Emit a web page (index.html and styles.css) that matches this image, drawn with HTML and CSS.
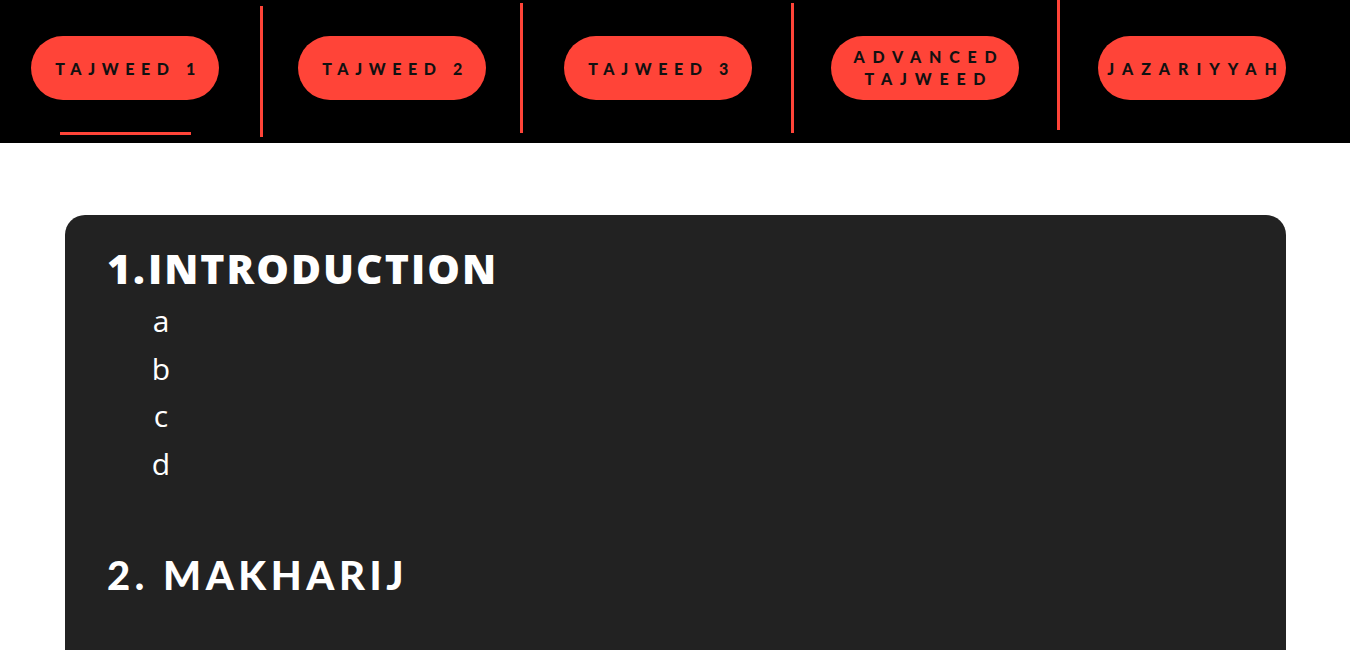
FILE: index.html
```html
<!DOCTYPE html>
<html lang="en">
<head>
<meta charset="utf-8">
<title>Tajweed</title>
<link rel="stylesheet" href="styles.css">
</head>
<body>
<header class="topbar">
  <nav class="nav">
    <div class="nav-item active">
      <a class="pill" href="#">TAJWEED 1</a>
      <span class="underline"></span>
    </div>
    <span class="sep sep-1"></span>
    <div class="nav-item"><a class="pill" href="#">TAJWEED 2</a></div>
    <span class="sep sep-2"></span>
    <div class="nav-item"><a class="pill" href="#">TAJWEED 3</a></div>
    <span class="sep sep-3"></span>
    <div class="nav-item"><a class="pill two-line" href="#">ADVANCED<br>TAJWEED</a></div>
    <span class="sep sep-4"></span>
    <div class="nav-item"><a class="pill wide" href="#">JAZARIYYAH</a></div>
  </nav>
</header>
<main class="page">
  <section class="card">
    <h2 class="title title-intro">1.<span class="gap"></span>INTRODUCTION</h2>
    <ul class="sublist">
      <li>a</li>
      <li>b</li>
      <li>c</li>
      <li>d</li>
    </ul>
    <h2 class="title title-makharij">2. MAKHARIJ</h2>
  </section>
</main>
</body>
</html>
```
FILE: styles.css
```css
* { box-sizing: border-box; }
html, body { margin: 0; padding: 0; }
body {
  background: #ffffff;
  font-family: "Open Sans", "Liberation Sans", sans-serif;
  overflow: hidden;
}
.topbar {
  background: #000000;
  height: 143px;
}
.nav {
  display: flex;
  align-items: flex-start;
  padding-left: 31px;
  height: 143px;
}
.nav-item {
  display: flex;
  flex-direction: column;
  align-items: center;
  margin-top: 36px;
  width: 188px;
}
.pill {
  display: flex;
  align-items: center;
  justify-content: center;
  text-align: center;
  width: 188px;
  height: 64px;
  border-radius: 32px;
  background: #ff4438;
  color: #111111;
  text-decoration: none;
  font-family: "Lato", "Open Sans", sans-serif;
  font-weight: 900;
  font-size: 16px;
  letter-spacing: 6.6px;
  padding-left: 7px;
}
.pill.two-line {
  line-height: 22px;
  letter-spacing: 7.8px;
  padding-left: 8px;
}
.pill.wide {
  letter-spacing: 8px;
  padding-left: 8px;
}
.underline {
  display: block;
  width: 131px;
  height: 3px;
  background: #ff4438;
  margin-top: 32px;
}
.sep {
  display: block;
  width: 3px;
  background: #ff4438;
  flex: none;
}
.sep-1 { margin: 6px 35px 0 41px; height: 131px; }
.sep-2 { margin: 3px 41px 0 34px; height: 130px; }
.sep-3 { margin: 3px 37px 0 39px; height: 130px; }
.sep-4 { margin: 0 38px 0 38px; height: 130px; }

.page {
  padding: 72px 64px 0 65px;
}
.card {
  background: #222222;
  border-radius: 20px 20px 0 0;
  height: 440px;
  padding: 24px 42px 0 42px;
  color: #ffffff;
}
.title {
  margin: 0;
  font-weight: 800;
  color: #ffffff;
}
.title-intro {
  font-family: "Open Sans", sans-serif;
  font-size: 41px;
  line-height: 58px;
  letter-spacing: 2px;
}
.gap {
  display: inline-block;
  width: 1px;
}
.sublist {
  list-style: none;
  margin: 0;
  padding: 0 0 0 44px;
}
.sublist li {
  font-family: "Open Sans", sans-serif;
  font-size: 30px;
  line-height: 47.5px;
  width: 20px;
  text-align: center;
}
.title-makharij {
  font-family: "Lato", "Open Sans", sans-serif;
  font-weight: 900;
  font-size: 40px;
  line-height: 60px;
  letter-spacing: 4.6px;
  margin-top: 58px;
}
```
